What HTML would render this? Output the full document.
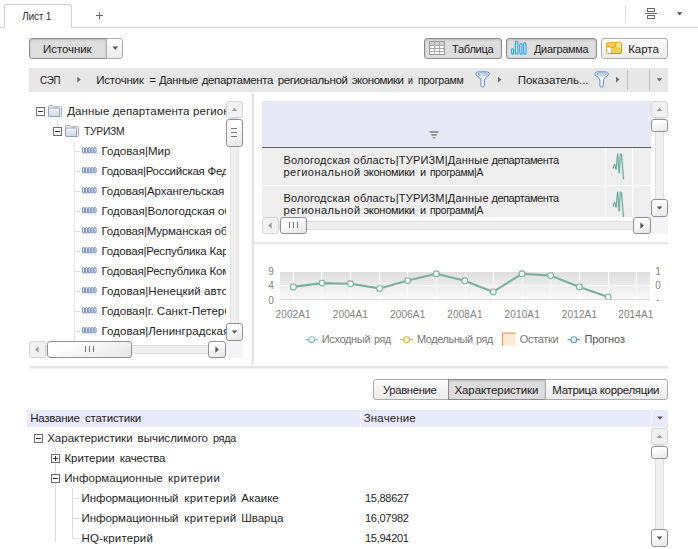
<!DOCTYPE html>
<html><head><meta charset="utf-8">
<style>
html,body{margin:0;padding:0;}
body{width:698px;height:549px;overflow:hidden;background:#fff;position:relative;font-family:"Liberation Sans",sans-serif;font-size:12px;color:#222;}
.a{position:absolute;}
.t{position:absolute;white-space:nowrap;line-height:14px;}
.btn{position:absolute;box-sizing:border-box;border:1px solid #acacac;border-radius:3px;background:linear-gradient(#fbfbfb,#ececec);}
.btn.on{background:#dddddd;border-color:#8c8c8c;box-shadow:inset 0 1px 2px rgba(0,0,0,.16);}
.sb{position:absolute;box-sizing:border-box;border:1px solid #d4d4d4;border-radius:3px;background:#f1f1f1;}
.sb.dk{border-color:#8d9097;background:linear-gradient(160deg,#ffffff 20%,#e6e6e6);}
.trk{position:absolute;background:#efefef;box-sizing:border-box;border:1px solid #e0e0e0;}
.ex{position:absolute;width:9px;height:9px;box-sizing:border-box;border:1px solid #6e6e6e;background:#fff;}
.ex i{position:absolute;left:1px;top:3px;width:5px;height:1px;background:#333;}
.ex b{position:absolute;left:3px;top:1px;width:1px;height:5px;background:#333;}
.ln{position:absolute;background:#dcdcdc;}
svg{position:absolute;overflow:visible;}
</style></head><body>
<div class="a" style="left:0;top:27px;width:698px;height:1px;background:#d2d2d2;"></div>
<div class="a" style="left:4px;top:4px;width:68px;height:24px;box-sizing:border-box;border:1px solid #d0d0d0;border-bottom:none;border-radius:3px 3px 0 0;background:#fff;"></div>
<div class="t" style="left:21.8px;top:9px;font-size:11.5px;color:#333;letter-spacing:-0.30px;transform:scaleX(0.894);transform-origin:0 0;">Лист 1</div>
<div class="a" style="left:96px;top:15px;width:7px;height:1px;background:#666;"></div>
<div class="a" style="left:99px;top:12px;width:1px;height:7px;background:#666;"></div>
<div class="a" style="left:625px;top:5px;width:1px;height:18px;background:#d8d8d8;"></div>
<div class="a" style="left:647px;top:8px;width:8px;height:4px;box-sizing:border-box;border:1px solid #666;"></div>
<div class="a" style="left:645px;top:13px;width:12px;height:1px;background:#666;"></div>
<div class="a" style="left:647px;top:15px;width:8px;height:4px;box-sizing:border-box;border:1px solid #666;"></div>
<svg style="left:0;top:0" width="698" height="549"><polygon points="676.9,12.2 682.5,12.2 679.7,15.5" fill="#555"/></svg>
<div class="btn on" style="left:29px;top:38px;width:78px;height:21px;border-radius:3px 0 0 3px;"></div>
<div class="btn" style="left:106px;top:38px;width:17px;height:21px;border-radius:0 3px 3px 0;"></div>
<div class="t" style="left:43.1px;top:42px;font-size:11.5px;color:#222;letter-spacing:-0.10px;">Источник</div>
<svg style="left:0;top:0" width="698" height="549"><polygon points="112.5,46.6 118.1,46.6 115.3,49.9" fill="#555"/></svg>
<div class="btn on" style="left:424px;top:38px;width:78px;height:21px;"></div>
<svg style="left:429px;top:41px" width="16" height="14" viewBox="0 0 16 14"><rect x="0.5" y="0.5" width="15" height="13" fill="#fff" stroke="#999"/><rect x="1" y="1" width="14" height="3" fill="#cfcfcf"/><path d="M0.5 4.5H15.5M0.5 7.5H15.5M0.5 10.5H15.5M5.5 0.5V13.5M10.5 0.5V13.5" stroke="#a8a8a8" fill="none"/></svg>
<div class="t" style="left:451.5px;top:42px;font-size:11.5px;color:#222;letter-spacing:-0.30px;transform:scaleX(0.963);transform-origin:0 0;">Таблица</div>
<div class="btn on" style="left:506px;top:38px;width:91px;height:21px;"></div>
<svg style="left:511px;top:41px" width="16" height="14" viewBox="0 0 16 14"><g fill="#eaf6fd" stroke="#1f9ee6" stroke-width="1.1"><rect x="0.6" y="7.8" width="2" height="5.3" rx="1"/><rect x="4.4" y="0.3" width="2.4" height="12.8" rx="1.2"/><rect x="8.8" y="2.6" width="2.1" height="10.5" rx="1"/><rect x="12.7" y="1.8" width="2.3" height="11.3" rx="1.1"/></g></svg>
<div class="t" style="left:533.9px;top:42px;font-size:11.5px;color:#222;letter-spacing:-0.30px;transform:scaleX(0.951);transform-origin:0 0;">Диаграмма</div>
<div class="btn" style="left:601px;top:38px;width:67px;height:21px;"></div>
<svg style="left:606px;top:42px" width="16" height="12" viewBox="0 0 16 12"><rect x="0.5" y="0.5" width="15" height="11" rx="1.3" fill="#efd04f" stroke="#dcae2c"/><path d="M15.5 1.5V10.3Q15.5 11.5 14.3 11.5H1.5" fill="none" stroke="#d08c26"/><path d="M10 1H15V7.3L13.4 5.8L12.3 5.2L11.2 5.6L10 4.2Z" fill="#f6ea92"/><path d="M1 5.3H4.4L5.7 6.3V9.2H5V11H1Z" fill="#fff"/><path d="M1 4.8H4.3L5.8 5.9L8.2 5.2L9.6 3.6L9.9 1" fill="none" stroke="#cf8a2c" stroke-width=".9"/><path d="M5.9 6.3L5.3 11" fill="none" stroke="#e3bf3a" stroke-width=".8"/></svg>
<div class="t" style="left:628.2px;top:42px;font-size:11.5px;color:#222;letter-spacing:-0.02px;">Карта</div>
<div class="a" style="left:29px;top:68px;width:639px;height:24px;background:#e7e7e7;"></div>
<div class="t" style="left:39.8px;top:73px;font-size:11.5px;color:#222;letter-spacing:-0.30px;transform:scaleX(0.846);transform-origin:0 0;">СЭП</div>
<svg style="left:0;top:0" width="698" height="549"><polygon points="77.3,76.7 77.3,82.5 80.7,79.6" fill="#666"/></svg>
<div class="t" style="left:96.3px;top:73px;font-size:11.5px;color:#222;letter-spacing:-0.22px;">Источник</div>
<div class="t" style="left:149.3px;top:73px;font-size:11.5px;color:#222;letter-spacing:-0.12px;">=</div>
<div class="t" style="left:158.8px;top:73px;font-size:11.5px;color:#222;letter-spacing:-0.30px;transform:scaleX(0.978);transform-origin:0 0;">Данные</div>
<div class="t" style="left:201.7px;top:73px;font-size:11.5px;color:#222;letter-spacing:-0.35px;">департамента</div>
<div class="t" style="left:277.7px;top:73px;font-size:11.5px;color:#222;letter-spacing:-0.39px;">региональной</div>
<div class="t" style="left:351.7px;top:73px;font-size:11.5px;color:#222;letter-spacing:-0.45px;">экономики</div>
<div class="t" style="left:408.4px;top:73px;font-size:11.5px;color:#222;letter-spacing:-0.30px;transform:scaleX(0.761);transform-origin:0 0;">и</div>
<div class="t" style="left:417.6px;top:73px;font-size:11.5px;color:#222;letter-spacing:-0.30px;transform:scaleX(0.921);transform-origin:0 0;">программ</div>
<svg style="left:475.4px;top:71.4px" width="15.2" height="17.1" viewBox="0 0 16 18"><path d="M0.9 3.2C0.9 1.5 2.4 0.9 4 0.9H12C13.6 0.9 15.1 1.5 15.1 3.2C15.1 4.7 13 5.7 11.6 6.7L9.9 9.4V15.6C9.9 17.3 6.2 17.3 6.2 15.6V9.4L4.4 6.7C3 5.7 0.9 4.7 0.9 3.2Z" fill="#f4f7fc" stroke="#5d83c2" stroke-width="1"/><path d="M2.7 3C2.7 1.8 13.3 1.8 13.3 3C13.3 4.9 2.7 4.9 2.7 3Z" fill="#fff" stroke="#6f92cb" stroke-width=".9"/></svg>
<svg style="left:0;top:0" width="698" height="549"><polygon points="498.0,76.7 498.0,82.5 501.4,79.6" fill="#666"/></svg>
<div class="t" style="left:517.7px;top:73px;font-size:11.5px;color:#222;letter-spacing:-0.02px;">Показатель...</div>
<svg style="left:593.6px;top:71.4px" width="15.2" height="17.1" viewBox="0 0 16 18"><path d="M0.9 3.2C0.9 1.5 2.4 0.9 4 0.9H12C13.6 0.9 15.1 1.5 15.1 3.2C15.1 4.7 13 5.7 11.6 6.7L9.9 9.4V15.6C9.9 17.3 6.2 17.3 6.2 15.6V9.4L4.4 6.7C3 5.7 0.9 4.7 0.9 3.2Z" fill="#f4f7fc" stroke="#5d83c2" stroke-width="1"/><path d="M2.7 3C2.7 1.8 13.3 1.8 13.3 3C13.3 4.9 2.7 4.9 2.7 3Z" fill="#fff" stroke="#6f92cb" stroke-width=".9"/></svg>
<svg style="left:0;top:0" width="698" height="549"><polygon points="616.0,76.7 616.0,82.5 619.4,79.6" fill="#666"/></svg>
<div class="a" style="left:627px;top:70px;width:1px;height:20px;background:#bdbdbd;"></div>
<div class="a" style="left:649px;top:70px;width:1px;height:20px;background:#bdbdbd;"></div>
<svg style="left:0;top:0" width="698" height="549"><polygon points="656.7,78.2 662.3,78.2 659.5,81.5" fill="#666"/></svg>
<div class="a" style="left:251px;top:93px;width:1px;height:272px;background:#f4f4f4;"></div>
<div class="a" style="left:252px;top:93px;width:2px;height:272px;background:#e5e5e5;"></div>
<div class="a" style="left:254px;top:242px;width:414px;height:2px;background:#e8e8e8;"></div>
<div class="a" style="left:254px;top:244px;width:414px;height:1px;background:#f4f4f4;"></div>
<div class="a" style="left:29px;top:366px;width:639px;height:2px;background:#e6e6e6;"></div>
<div class="a" style="left:29px;top:368px;width:639px;height:1px;background:#f3f3f3;"></div>
<div class="a" style="left:0;top:0;width:226px;height:341px;overflow:hidden;">
<div class="ln" style="left:57px;top:120px;width:1px;height:7px;"></div>
<div class="ln" style="left:74px;top:141px;width:1px;height:200px;background:#e6e6e6;"></div>
<div class="ex" style="left:36px;top:107px;"><i></i></div>
<svg style="left:48px;top:105px" width="14" height="12" viewBox="0 0 14 12"><defs><linearGradient id="fg1" x1="0" y1="0" x2="0" y2="1"><stop offset="0" stop-color="#f2f5f9"/><stop offset="1" stop-color="#ccd7e5"/></linearGradient></defs><path d="M0.5 10.5 V1.5 Q0.5 0.5 1.5 0.5 H5.2 L6.4 1.8 H12.5 Q13.5 1.8 13.5 2.8 V10.5 Q13.5 11.5 12.5 11.5 H1.5 Q0.5 11.5 0.5 10.5Z" fill="#f8fafc" stroke="#9ca8b7"/><rect x="0.5" y="3" width="11" height="8.5" rx="1" fill="url(#fg1)" stroke="#93a1b5"/></svg>
<div class="ex" style="left:53px;top:127px;"><i></i></div>
<svg style="left:65px;top:125px" width="14" height="12" viewBox="0 0 14 12"><defs><linearGradient id="fg2" x1="0" y1="0" x2="0" y2="1"><stop offset="0" stop-color="#f2f5f9"/><stop offset="1" stop-color="#ccd7e5"/></linearGradient></defs><path d="M0.5 10.5 V1.5 Q0.5 0.5 1.5 0.5 H5.2 L6.4 1.8 H12.5 Q13.5 1.8 13.5 2.8 V10.5 Q13.5 11.5 12.5 11.5 H1.5 Q0.5 11.5 0.5 10.5Z" fill="#f8fafc" stroke="#9ca8b7"/><rect x="0.5" y="3" width="11" height="8.5" rx="1" fill="url(#fg2)" stroke="#93a1b5"/></svg>
<div class="t" style="left:67.2px;top:104px;font-size:11.5px;color:#1e1e1e;letter-spacing:0.11px;">Данные департамента региональной</div>
<div class="t" style="left:84px;top:124px;font-size:11.5px;color:#1e1e1e;letter-spacing:-0.30px;transform:scaleX(0.896);transform-origin:0 0;">ТУРИЗМ</div>
<div class="ln" style="left:75px;top:151px;width:5px;height:1px;"></div>
<svg style="left:82px;top:147px" width="15" height="7" viewBox="0 0 15 7"><g fill="#eef2f8" stroke="#5877ad" stroke-width="0.85"><rect x="0.5" y="0.5" width="2" height="5.6" rx="1"/><rect x="3.4" y="0.5" width="2" height="5.6" rx="1"/><rect x="6.3" y="0.5" width="2" height="5.6" rx="1"/><rect x="9.2" y="0.5" width="2" height="5.6" rx="1"/><rect x="12.1" y="0.5" width="2" height="5.6" rx="1"/></g></svg>
<div class="t" style="left:101.5px;top:144px;font-size:11.5px;color:#1e1e1e;letter-spacing:0.02px;">Годовая|Мир</div>
<div class="ln" style="left:75px;top:171px;width:5px;height:1px;"></div>
<svg style="left:82px;top:167px" width="15" height="7" viewBox="0 0 15 7"><g fill="#eef2f8" stroke="#5877ad" stroke-width="0.85"><rect x="0.5" y="0.5" width="2" height="5.6" rx="1"/><rect x="3.4" y="0.5" width="2" height="5.6" rx="1"/><rect x="6.3" y="0.5" width="2" height="5.6" rx="1"/><rect x="9.2" y="0.5" width="2" height="5.6" rx="1"/><rect x="12.1" y="0.5" width="2" height="5.6" rx="1"/></g></svg>
<div class="t" style="left:101.5px;top:164px;font-size:11.5px;color:#1e1e1e;letter-spacing:-0.27px;">Годовая|Российская Федерация</div>
<div class="ln" style="left:75px;top:191px;width:5px;height:1px;"></div>
<svg style="left:82px;top:187px" width="15" height="7" viewBox="0 0 15 7"><g fill="#eef2f8" stroke="#5877ad" stroke-width="0.85"><rect x="0.5" y="0.5" width="2" height="5.6" rx="1"/><rect x="3.4" y="0.5" width="2" height="5.6" rx="1"/><rect x="6.3" y="0.5" width="2" height="5.6" rx="1"/><rect x="9.2" y="0.5" width="2" height="5.6" rx="1"/><rect x="12.1" y="0.5" width="2" height="5.6" rx="1"/></g></svg>
<div class="t" style="left:101.5px;top:184px;font-size:11.5px;color:#1e1e1e;letter-spacing:-0.11px;">Годовая|Архангельская область</div>
<div class="ln" style="left:75px;top:211px;width:5px;height:1px;"></div>
<svg style="left:82px;top:207px" width="15" height="7" viewBox="0 0 15 7"><g fill="#eef2f8" stroke="#5877ad" stroke-width="0.85"><rect x="0.5" y="0.5" width="2" height="5.6" rx="1"/><rect x="3.4" y="0.5" width="2" height="5.6" rx="1"/><rect x="6.3" y="0.5" width="2" height="5.6" rx="1"/><rect x="9.2" y="0.5" width="2" height="5.6" rx="1"/><rect x="12.1" y="0.5" width="2" height="5.6" rx="1"/></g></svg>
<div class="t" style="left:101.5px;top:204px;font-size:11.5px;color:#1e1e1e;letter-spacing:-0.03px;">Годовая|Вологодская область</div>
<div class="ln" style="left:75px;top:231px;width:5px;height:1px;"></div>
<svg style="left:82px;top:227px" width="15" height="7" viewBox="0 0 15 7"><g fill="#eef2f8" stroke="#5877ad" stroke-width="0.85"><rect x="0.5" y="0.5" width="2" height="5.6" rx="1"/><rect x="3.4" y="0.5" width="2" height="5.6" rx="1"/><rect x="6.3" y="0.5" width="2" height="5.6" rx="1"/><rect x="9.2" y="0.5" width="2" height="5.6" rx="1"/><rect x="12.1" y="0.5" width="2" height="5.6" rx="1"/></g></svg>
<div class="t" style="left:101.5px;top:224px;font-size:11.5px;color:#1e1e1e;letter-spacing:-0.13px;">Годовая|Мурманская область</div>
<div class="ln" style="left:75px;top:251px;width:5px;height:1px;"></div>
<svg style="left:82px;top:247px" width="15" height="7" viewBox="0 0 15 7"><g fill="#eef2f8" stroke="#5877ad" stroke-width="0.85"><rect x="0.5" y="0.5" width="2" height="5.6" rx="1"/><rect x="3.4" y="0.5" width="2" height="5.6" rx="1"/><rect x="6.3" y="0.5" width="2" height="5.6" rx="1"/><rect x="9.2" y="0.5" width="2" height="5.6" rx="1"/><rect x="12.1" y="0.5" width="2" height="5.6" rx="1"/></g></svg>
<div class="t" style="left:101.5px;top:244px;font-size:11.5px;color:#1e1e1e;letter-spacing:-0.20px;">Годовая|Республика Карелия</div>
<div class="ln" style="left:75px;top:271px;width:5px;height:1px;"></div>
<svg style="left:82px;top:267px" width="15" height="7" viewBox="0 0 15 7"><g fill="#eef2f8" stroke="#5877ad" stroke-width="0.85"><rect x="0.5" y="0.5" width="2" height="5.6" rx="1"/><rect x="3.4" y="0.5" width="2" height="5.6" rx="1"/><rect x="6.3" y="0.5" width="2" height="5.6" rx="1"/><rect x="9.2" y="0.5" width="2" height="5.6" rx="1"/><rect x="12.1" y="0.5" width="2" height="5.6" rx="1"/></g></svg>
<div class="t" style="left:101.5px;top:264px;font-size:11.5px;color:#1e1e1e;letter-spacing:-0.20px;">Годовая|Республика Коми</div>
<div class="ln" style="left:75px;top:291px;width:5px;height:1px;"></div>
<svg style="left:82px;top:287px" width="15" height="7" viewBox="0 0 15 7"><g fill="#eef2f8" stroke="#5877ad" stroke-width="0.85"><rect x="0.5" y="0.5" width="2" height="5.6" rx="1"/><rect x="3.4" y="0.5" width="2" height="5.6" rx="1"/><rect x="6.3" y="0.5" width="2" height="5.6" rx="1"/><rect x="9.2" y="0.5" width="2" height="5.6" rx="1"/><rect x="12.1" y="0.5" width="2" height="5.6" rx="1"/></g></svg>
<div class="t" style="left:101.5px;top:284px;font-size:11.5px;color:#1e1e1e;letter-spacing:0.06px;">Годовая|Ненецкий автономный</div>
<div class="ln" style="left:75px;top:311px;width:5px;height:1px;"></div>
<svg style="left:82px;top:307px" width="15" height="7" viewBox="0 0 15 7"><g fill="#eef2f8" stroke="#5877ad" stroke-width="0.85"><rect x="0.5" y="0.5" width="2" height="5.6" rx="1"/><rect x="3.4" y="0.5" width="2" height="5.6" rx="1"/><rect x="6.3" y="0.5" width="2" height="5.6" rx="1"/><rect x="9.2" y="0.5" width="2" height="5.6" rx="1"/><rect x="12.1" y="0.5" width="2" height="5.6" rx="1"/></g></svg>
<div class="t" style="left:101.5px;top:304px;font-size:11.5px;color:#1e1e1e;letter-spacing:-0.02px;">Годовая|г. Санкт-Петербург</div>
<div class="ln" style="left:75px;top:331px;width:5px;height:1px;"></div>
<svg style="left:82px;top:327px" width="15" height="7" viewBox="0 0 15 7"><g fill="#eef2f8" stroke="#5877ad" stroke-width="0.85"><rect x="0.5" y="0.5" width="2" height="5.6" rx="1"/><rect x="3.4" y="0.5" width="2" height="5.6" rx="1"/><rect x="6.3" y="0.5" width="2" height="5.6" rx="1"/><rect x="9.2" y="0.5" width="2" height="5.6" rx="1"/><rect x="12.1" y="0.5" width="2" height="5.6" rx="1"/></g></svg>
<div class="t" style="left:101.5px;top:324px;font-size:11.5px;color:#1e1e1e;letter-spacing:0.05px;">Годовая|Ленинградская область</div>
</div>
<div class="trk" style="left:230px;top:118px;width:9px;height:206px;"></div>
<div class="sb" style="left:226px;top:101px;width:17px;height:17px;"></div>
<svg style="left:0;top:0" width="698" height="549"><polygon points="231.7,111.1 237.3,111.1 234.5,107.8" fill="#999"/></svg>
<div class="sb dk" style="left:226px;top:119px;width:17px;height:28px;"></div>
<div class="a" style="left:231px;top:128px;width:6px;height:1px;background:#777;"></div>
<div class="a" style="left:231px;top:132px;width:6px;height:1px;background:#777;"></div>
<div class="a" style="left:231px;top:136px;width:6px;height:1px;background:#777;"></div>
<div class="sb dk" style="left:226px;top:323px;width:17px;height:18px;"></div>
<svg style="left:0;top:0" width="698" height="549"><polygon points="231.7,330.4 237.3,330.4 234.5,333.7" fill="#555"/></svg>
<div class="trk" style="left:46px;top:345px;width:180px;height:9px;"></div>
<div class="sb" style="left:29px;top:341px;width:17px;height:17px;"></div>
<svg style="left:0;top:0" width="698" height="549"><polygon points="38.6,346.3 38.6,352.7 35.2,349.5" fill="#999"/></svg>
<div class="sb dk" style="left:47px;top:341px;width:85px;height:17px;"></div>
<div class="a" style="left:85px;top:346px;width:1px;height:6px;background:#777;"></div>
<div class="a" style="left:89px;top:346px;width:1px;height:6px;background:#777;"></div>
<div class="a" style="left:93px;top:346px;width:1px;height:6px;background:#777;"></div>
<div class="sb dk" style="left:208px;top:341px;width:18px;height:17px;"></div>
<svg style="left:0;top:0" width="698" height="549"><polygon points="215.4,346.3 215.4,352.7 218.8,349.5" fill="#555"/></svg>
<div class="a" style="left:226px;top:341px;width:17px;height:17px;background:#f4f4f4;"></div>
<div class="a" style="left:0;top:0;width:651px;height:217px;overflow:hidden;">
<div class="a" style="left:262px;top:101px;width:389px;height:46px;background:#e6e8f5;"></div>
<div class="a" style="left:262px;top:147px;width:389px;height:1px;background:#5a5a5a;"></div>
<div class="a" style="left:262px;top:148px;width:389px;height:69px;background:#eeeeee;"></div>
<div class="a" style="left:262px;top:185px;width:389px;height:1px;background:#fff;"></div>
<div class="a" style="left:605px;top:148px;width:1px;height:69px;background:#fff;"></div>
<div class="a" style="left:632px;top:148px;width:1px;height:69px;background:#fff;"></div>
<svg style="left:0;top:0" width="698" height="549"><g fill="#9a9a9a"><polygon points="429,131 439,131 437.9,133 430.1,133"/><polygon points="430.7,134 437.3,134 436.3,136 431.7,136"/><polygon points="432.2,137 435.8,137 434,139.3"/></g></svg>
<div class="t" style="left:283.4px;top:153px;font-size:11px;color:#1a1a1a;letter-spacing:0.20px;">Вологодская</div>
<div class="t" style="left:353.6px;top:153px;font-size:11px;color:#1a1a1a;letter-spacing:0.20px;">область|ТУРИЗМ|Данные</div>
<div class="t" style="left:491.4px;top:153px;font-size:11px;color:#1a1a1a;letter-spacing:-0.42px;">департамента</div>
<div class="t" style="left:283.4px;top:165px;font-size:11px;color:#1a1a1a;letter-spacing:0.50px;">региональной</div>
<div class="t" style="left:363.5px;top:165px;font-size:11px;color:#1a1a1a;letter-spacing:-0.27px;">экономики</div>
<div class="t" style="left:420px;top:165px;font-size:11px;color:#1a1a1a;letter-spacing:-0.16px;">и</div>
<div class="t" style="left:429.5px;top:165px;font-size:11px;color:#1a1a1a;letter-spacing:-0.30px;transform:scaleX(0.934);transform-origin:0 0;">программ|А</div>
<div class="t" style="left:283.4px;top:191px;font-size:11px;color:#1a1a1a;letter-spacing:0.20px;">Вологодская</div>
<div class="t" style="left:353.6px;top:191px;font-size:11px;color:#1a1a1a;letter-spacing:0.20px;">область|ТУРИЗМ|Данные</div>
<div class="t" style="left:491.4px;top:191px;font-size:11px;color:#1a1a1a;letter-spacing:-0.42px;">департамента</div>
<div class="t" style="left:283.4px;top:203px;font-size:11px;color:#1a1a1a;letter-spacing:0.50px;">региональной</div>
<div class="t" style="left:363.5px;top:203px;font-size:11px;color:#1a1a1a;letter-spacing:-0.27px;">экономики</div>
<div class="t" style="left:420px;top:203px;font-size:11px;color:#1a1a1a;letter-spacing:-0.16px;">и</div>
<div class="t" style="left:429.5px;top:203px;font-size:11px;color:#1a1a1a;letter-spacing:-0.30px;transform:scaleX(0.934);transform-origin:0 0;">программ|А</div>
<svg style="left:612px;top:152px" width="13" height="29" viewBox="0 0 13 29"><path d="M1 16.6 L2.6 12 L4.1 17.4 L5.6 1.9 L7.2 21.2 L8.4 1.9 L9.5 2.7 L11.5 27.4" fill="none" stroke="#9fcdc2" stroke-width="2" stroke-linejoin="round" opacity=".4"/><path d="M1 16.6 L2.6 12 L4.1 17.4 L5.6 1.9 L7.2 21.2 L8.4 1.9 L9.5 2.7 L11.5 27.4" fill="none" stroke="#5aa394" stroke-width="0.9" stroke-linejoin="round"/></svg>
<svg style="left:612px;top:190px" width="13" height="29" viewBox="0 0 13 29"><path d="M1 16.6 L2.6 12 L4.1 17.4 L5.6 1.9 L7.2 21.2 L8.4 1.9 L9.5 2.7 L11.5 27.4" fill="none" stroke="#9fcdc2" stroke-width="2" stroke-linejoin="round" opacity=".4"/><path d="M1 16.6 L2.6 12 L4.1 17.4 L5.6 1.9 L7.2 21.2 L8.4 1.9 L9.5 2.7 L11.5 27.4" fill="none" stroke="#5aa394" stroke-width="0.9" stroke-linejoin="round"/></svg>
</div>
<div class="trk" style="left:655px;top:118px;width:9px;height:82px;"></div>
<div class="sb" style="left:651px;top:101px;width:17px;height:17px;"></div>
<svg style="left:0;top:0" width="698" height="549"><polygon points="656.7,111.1 662.3,111.1 659.5,107.8" fill="#999"/></svg>
<div class="sb dk" style="left:651px;top:119px;width:17px;height:13px;"></div>
<div class="sb dk" style="left:651px;top:199px;width:17px;height:18px;"></div>
<svg style="left:0;top:0" width="698" height="549"><polygon points="656.7,206.4 662.3,206.4 659.5,209.7" fill="#555"/></svg>
<div class="trk" style="left:279px;top:221px;width:372px;height:9px;"></div>
<div class="sb" style="left:262px;top:217px;width:17px;height:17px;"></div>
<svg style="left:0;top:0" width="698" height="549"><polygon points="271.6,222.3 271.6,228.7 268.2,225.5" fill="#999"/></svg>
<div class="sb dk" style="left:280px;top:217px;width:27px;height:17px;"></div>
<div class="a" style="left:289px;top:222px;width:1px;height:6px;background:#777;"></div>
<div class="a" style="left:293px;top:222px;width:1px;height:6px;background:#777;"></div>
<div class="a" style="left:297px;top:222px;width:1px;height:6px;background:#777;"></div>
<div class="sb dk" style="left:633px;top:217px;width:18px;height:17px;"></div>
<svg style="left:0;top:0" width="698" height="549"><polygon points="640.4,222.3 640.4,228.7 643.8,225.5" fill="#555"/></svg>
<div class="a" style="left:651px;top:217px;width:17px;height:17px;background:#f4f4f4;"></div>
<div class="a" style="left:280px;top:272px;width:370px;height:27px;background:linear-gradient(#dedede,#f9f9f9);"></div>
<div class="a" style="left:280px;top:299px;width:370px;height:1px;background:#d9d9d9;"></div>
<div class="a" style="left:293px;top:272px;width:1px;height:27px;background:#fff;opacity:.9"></div>
<div class="a" style="left:321px;top:272px;width:1px;height:27px;background:#fff;opacity:.9"></div>
<div class="a" style="left:350px;top:272px;width:1px;height:27px;background:#fff;opacity:.9"></div>
<div class="a" style="left:379px;top:272px;width:1px;height:27px;background:#fff;opacity:.9"></div>
<div class="a" style="left:407px;top:272px;width:1px;height:27px;background:#fff;opacity:.9"></div>
<div class="a" style="left:436px;top:272px;width:1px;height:27px;background:#fff;opacity:.9"></div>
<div class="a" style="left:465px;top:272px;width:1px;height:27px;background:#fff;opacity:.9"></div>
<div class="a" style="left:493px;top:272px;width:1px;height:27px;background:#fff;opacity:.9"></div>
<div class="a" style="left:522px;top:272px;width:1px;height:27px;background:#fff;opacity:.9"></div>
<div class="a" style="left:550px;top:272px;width:1px;height:27px;background:#fff;opacity:.9"></div>
<div class="a" style="left:579px;top:272px;width:1px;height:27px;background:#fff;opacity:.9"></div>
<div class="a" style="left:608px;top:272px;width:1px;height:27px;background:#fff;opacity:.9"></div>
<div class="a" style="left:636px;top:272px;width:1px;height:27px;background:#fff;opacity:.9"></div>
<div class="a" style="left:280px;top:285px;width:370px;height:1px;background:#fff;opacity:.9"></div>
<svg style="left:0;top:0" width="698" height="549" viewBox="0 0 698 549"><defs><clipPath id="pc"><rect x="279" y="268" width="372" height="31.6"/></clipPath></defs><g clip-path="url(#pc)"><polyline points="293.3,286.9 321.9,283.1 350.5,283.8 379.6,288.4 407.7,280.6 436.3,273.8 464.7,280.8 493.2,291.9 522.0,273.8 550.6,275.6 579.4,286.9 608.2,296.9" fill="none" stroke="#78b09d" stroke-width="2.1" stroke-linejoin="round"/><circle cx="293.3" cy="286.9" r="2.9" fill="#fff" stroke="#78b09d" stroke-width="1.1"/><circle cx="321.9" cy="283.1" r="2.9" fill="#fff" stroke="#78b09d" stroke-width="1.1"/><circle cx="350.5" cy="283.8" r="2.9" fill="#fff" stroke="#78b09d" stroke-width="1.1"/><circle cx="379.6" cy="288.4" r="2.9" fill="#fff" stroke="#78b09d" stroke-width="1.1"/><circle cx="407.7" cy="280.6" r="2.9" fill="#fff" stroke="#78b09d" stroke-width="1.1"/><circle cx="436.3" cy="273.8" r="2.9" fill="#fff" stroke="#78b09d" stroke-width="1.1"/><circle cx="464.7" cy="280.8" r="2.9" fill="#fff" stroke="#78b09d" stroke-width="1.1"/><circle cx="493.2" cy="291.9" r="2.9" fill="#fff" stroke="#78b09d" stroke-width="1.1"/><circle cx="522.0" cy="273.8" r="2.9" fill="#fff" stroke="#78b09d" stroke-width="1.1"/><circle cx="550.6" cy="275.6" r="2.9" fill="#fff" stroke="#78b09d" stroke-width="1.1"/><circle cx="579.4" cy="286.9" r="2.9" fill="#fff" stroke="#78b09d" stroke-width="1.1"/><circle cx="608.2" cy="296.9" r="2.9" fill="#fff" stroke="#78b09d" stroke-width="1.1"/></g><path d="M305.3 339.7H317.9" stroke="#86bdb0" stroke-width="1.2"/><circle cx="311.6" cy="339.7" r="2.9" fill="#fff" stroke="#86bdb0" stroke-width="1.1"/><path d="M400.4 339.7H413.0" stroke="#c9b83a" stroke-width="1.2"/><circle cx="406.7" cy="339.7" r="2.9" fill="#fff" stroke="#c9b83a" stroke-width="1.1"/><path d="M567.6 339.7H580.2" stroke="#5b9bd8" stroke-width="1.2"/><circle cx="573.9" cy="339.7" r="2.9" fill="#fff" stroke="#5b9bd8" stroke-width="1.1"/><rect x="502.5" y="333.2" width="13" height="12.5" fill="#fdebd3"/><path d="M502.5 345.7V333.2H515.5" fill="none" stroke="#dba05a" stroke-width="1.2"/></svg>
<div class="t" style="left:268.2px;top:265px;font-size:10px;color:#808080;">9</div>
<div class="t" style="left:268.2px;top:279px;font-size:10px;color:#808080;">4</div>
<div class="t" style="left:268.2px;top:294px;font-size:10px;color:#808080;">0</div>
<div class="t" style="left:655.3px;top:265px;font-size:10px;color:#808080;">1</div>
<div class="t" style="left:655.3px;top:279px;font-size:10px;color:#808080;">0</div>
<div class="t" style="left:656px;top:293px;font-size:10px;color:#808080;">-</div>
<div class="t" style="left:275.5px;top:308px;font-size:10px;color:#808080;letter-spacing:0.14px;">2002A1</div>
<div class="t" style="left:332.76px;top:308px;font-size:10px;color:#808080;letter-spacing:0.14px;">2004A1</div>
<div class="t" style="left:390.02px;top:308px;font-size:10px;color:#808080;letter-spacing:0.14px;">2006A1</div>
<div class="t" style="left:447.28px;top:308px;font-size:10px;color:#808080;letter-spacing:0.14px;">2008A1</div>
<div class="t" style="left:504.54px;top:308px;font-size:10px;color:#808080;letter-spacing:0.14px;">2010A1</div>
<div class="t" style="left:561.8px;top:308px;font-size:10px;color:#808080;letter-spacing:0.14px;">2012A1</div>
<div class="t" style="left:618.2px;top:308px;font-size:10px;color:#808080;letter-spacing:0.14px;">2014A1</div>
<div class="t" style="left:321.7px;top:332px;font-size:11px;color:#777;letter-spacing:-0.33px;">Исходный</div>
<div class="t" style="left:373.8px;top:332px;font-size:11px;color:#777;letter-spacing:-0.30px;transform:scaleX(0.962);transform-origin:0 0;">ряд</div>
<div class="t" style="left:417px;top:332px;font-size:11px;color:#777;letter-spacing:-0.43px;">Модельный</div>
<div class="t" style="left:476.3px;top:332px;font-size:11px;color:#777;letter-spacing:-0.30px;transform:scaleX(0.973);transform-origin:0 0;">ряд</div>
<div class="t" style="left:519.8px;top:332px;font-size:11px;color:#777;letter-spacing:-0.34px;">Остатки</div>
<div class="t" style="left:584.4px;top:332px;font-size:11px;color:#555;letter-spacing:-0.11px;">Прогноз</div>
<div class="btn" style="left:373px;top:379px;width:76px;height:21px;border-radius:3px 0 0 3px;"></div>
<div class="btn on" style="left:448px;top:379px;width:98px;height:21px;border-radius:0;"></div>
<div class="btn" style="left:545px;top:379px;width:123px;height:21px;border-radius:0 3px 3px 0;"></div>
<div class="t" style="left:383.3px;top:383px;font-size:11.5px;color:#222;letter-spacing:-0.30px;transform:scaleX(0.973);transform-origin:0 0;">Уравнение</div>
<div class="t" style="left:454.5px;top:383px;font-size:11.5px;color:#222;letter-spacing:-0.10px;">Характеристики</div>
<div class="t" style="left:552.3px;top:383px;font-size:11.5px;color:#222;letter-spacing:-0.33px;">Матрица корреляции</div>
<div class="a" style="left:27px;top:410px;width:333px;height:17px;background:#e9e9fc;"></div>
<div class="a" style="left:361px;top:410px;width:290px;height:17px;background:#e9e9fc;"></div>
<div class="a" style="left:652px;top:410px;width:16px;height:17px;background:#e9e9fc;"></div>
<svg style="left:0;top:0" width="698" height="549"><polygon points="657.2,416.4 662.8,416.4 660.0,419.7" fill="#555"/></svg>
<div class="t" style="left:30.2px;top:411px;font-size:11.5px;color:#1e1e1e;letter-spacing:-0.24px;">Название</div>
<div class="t" style="left:85px;top:411px;font-size:11.5px;color:#1e1e1e;letter-spacing:-0.15px;">статистики</div>
<div class="t" style="left:363.8px;top:411px;font-size:11.5px;color:#1e1e1e;letter-spacing:0.13px;">Значение</div>
<div class="ln" style="left:55px;top:448px;width:1px;height:94px;"></div>
<div class="ln" style="left:72px;top:488px;width:1px;height:51px;"></div>
<div class="ln" style="left:73px;top:498px;width:6px;height:1px;"></div>
<div class="ln" style="left:73px;top:518px;width:6px;height:1px;"></div>
<div class="ln" style="left:73px;top:538px;width:6px;height:1px;"></div>
<div class="ex" style="left:34px;top:434px;"><i></i></div>
<div class="t" style="left:47.2px;top:431px;font-size:11.5px;color:#1e1e1e;letter-spacing:0.01px;">Характеристики</div>
<div class="t" style="left:137.5px;top:431px;font-size:11.5px;color:#1e1e1e;letter-spacing:0.02px;">вычислимого</div>
<div class="t" style="left:213px;top:431px;font-size:11.5px;color:#1e1e1e;letter-spacing:-0.30px;transform:scaleX(0.939);transform-origin:0 0;">ряда</div>
<div class="ex" style="left:51px;top:454px;"><i></i><b></b></div>
<div class="t" style="left:64.4px;top:451px;font-size:11.5px;color:#1e1e1e;">Критерии</div>
<div class="t" style="left:119.8px;top:451px;font-size:11.5px;color:#1e1e1e;letter-spacing:-0.23px;">качества</div>
<div class="ex" style="left:51px;top:474px;"><i></i></div>
<div class="t" style="left:64.3px;top:471px;font-size:11.5px;color:#1e1e1e;letter-spacing:0.04px;">Информационные</div>
<div class="t" style="left:168.1px;top:471px;font-size:11.5px;color:#1e1e1e;letter-spacing:0.44px;">критерии</div>
<div class="t" style="left:81.6px;top:491px;font-size:11.5px;color:#1e1e1e;letter-spacing:-0.08px;">Информационный</div>
<div class="t" style="left:184.2px;top:491px;font-size:11.5px;color:#1e1e1e;letter-spacing:0.49px;">критерий</div>
<div class="t" style="left:241.2px;top:491px;font-size:11.5px;color:#1e1e1e;letter-spacing:0.05px;">Акаике</div>
<div class="t" style="left:81.6px;top:511px;font-size:11.5px;color:#1e1e1e;letter-spacing:-0.08px;">Информационный</div>
<div class="t" style="left:184.2px;top:511px;font-size:11.5px;color:#1e1e1e;letter-spacing:0.49px;">критерий</div>
<div class="t" style="left:241.2px;top:511px;font-size:11.5px;color:#1e1e1e;letter-spacing:-0.02px;">Шварца</div>
<div class="t" style="left:81.6px;top:531px;font-size:11.5px;color:#1e1e1e;letter-spacing:0.15px;">HQ-критерий</div>
<div class="t" style="left:365px;top:491px;font-size:11px;color:#1e1e1e;letter-spacing:-0.28px;">15,88627</div>
<div class="t" style="left:365px;top:511px;font-size:11px;color:#1e1e1e;letter-spacing:-0.28px;">16,07982</div>
<div class="t" style="left:365px;top:531px;font-size:11px;color:#1e1e1e;letter-spacing:-0.28px;">15,94201</div>
<div class="trk" style="left:655px;top:445px;width:9px;height:85px;"></div>
<div class="sb" style="left:651px;top:428px;width:17px;height:17px;"></div>
<svg style="left:0;top:0" width="698" height="549"><polygon points="656.7,438.1 662.3,438.1 659.5,434.8" fill="#999"/></svg>
<div class="sb dk" style="left:651px;top:446px;width:17px;height:13px;"></div>
<div class="sb dk" style="left:651px;top:529px;width:17px;height:18px;"></div>
<svg style="left:0;top:0" width="698" height="549"><polygon points="656.7,536.4 662.3,536.4 659.5,539.7" fill="#555"/></svg>
</body></html>
